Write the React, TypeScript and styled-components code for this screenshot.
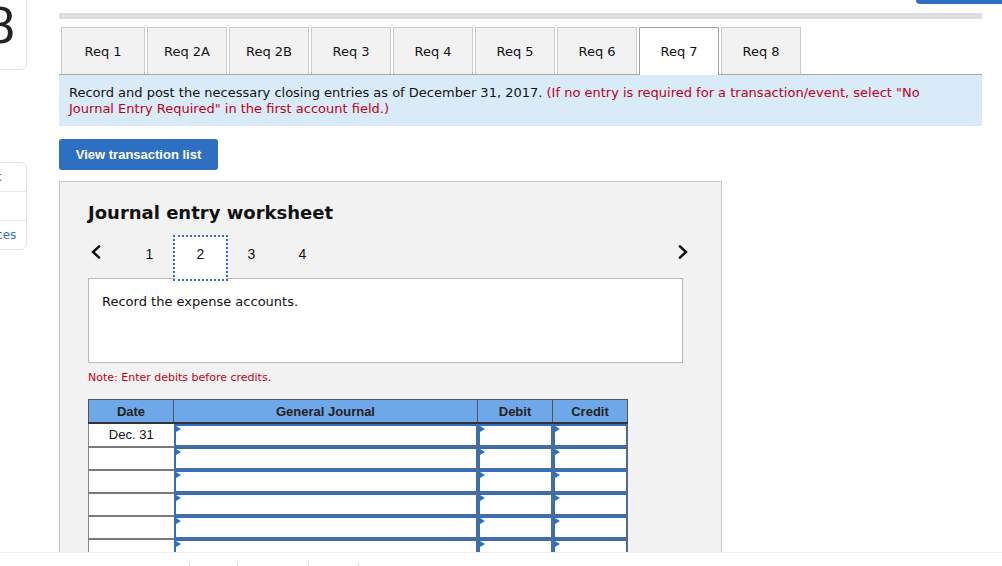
import styled, { createGlobalStyle, css } from "styled-components";

const GlobalStyle = createGlobalStyle`
  html, body {
    margin: 0;
    padding: 0;
    background: #fff;
  }
  body {
    font-family: "DejaVu Sans", Verdana, sans-serif;
    color: #111;
  }
`;

const Page = styled.div`
  width: 1002px;
  height: 566px;
  display: flex;
  flex-direction: column;
  overflow: hidden;
`;

const Body = styled.div`
  flex: 1;
  min-height: 0;
  display: flex;
`;

const Sidebar = styled.div`
  width: 59px;
  flex-shrink: 0;
  overflow: hidden;
  display: flex;
  flex-direction: column;
`;

const SideCard = styled.div<{ $top: number; $height: number }>`
  width: 88px;
  height: ${(p) => p.$height}px;
  margin-left: -61px;
  margin-top: ${(p) => p.$top}px;
  box-sizing: border-box;
  border: 1px solid #e4e4e4;
  border-radius: 6px;
  background: #fff;
  display: flex;
  flex-direction: column;
`;

const BigNumber = styled.div`
  flex: 1;
  display: flex;
  align-items: flex-end;
  justify-content: center;
  padding-bottom: 18px;
  padding-left: 6px;
  font-family: "Liberation Sans", Arial, sans-serif;
  font-size: 52px;
  line-height: 1;
  color: #222;
`;

const SideLink = styled.div`
  height: 29px;
  display: flex;
  align-items: center;
  justify-content: center;
  font-family: "DejaVu Sans", Verdana, sans-serif;
  font-size: 12px;
  color: #2f72c4;
  & + & {
    border-top: 1px solid #e6e6e6;
  }
`;

const Main = styled.div`
  width: 923px;
  padding-right: 20px;
  display: flex;
  flex-direction: column;
`;

const TopRow = styled.div`
  height: 13px;
  margin-right: -20px;
  display: flex;
  justify-content: flex-end;
`;

const TopButton = styled.div`
  width: 86px;
  height: 4px;
  background: #2f6fc2;
  border-radius: 0 0 0 4px;
`;

const GrayBar = styled.div`
  height: 6px;
  background: #dedede;
`;

const Tabs = styled.div`
  margin-top: 8px;
  display: flex;
  gap: 2px;
  padding-left: 2px;
  border-bottom: 1px solid #a9a9a9;
`;

const Tab = styled.div<{ $active?: boolean; $wide?: boolean }>`
  width: ${(p) => (p.$wide ? 84 : 80)}px;
  height: 47px;
  box-sizing: border-box;
  display: flex;
  align-items: center;
  justify-content: center;
  font-size: 13px;
  color: #111;
  background: #f2f2f2;
  border: 1px solid #c9c9c9;
  border-bottom: none;
  ${(p) =>
    p.$active &&
    css`
      background: #fff;
      border-color: #a0a0a0;
      height: 48px;
      margin-bottom: -1px;
    `}
`;

const Info = styled.div`
  background: #d9ebf9;
  padding: 10px 48px 9px 10px;
  font-size: 13px;
  line-height: 16px;
  color: #111;
`;

const Red = styled.span`
  color: #c00018;
`;

const PrimaryButton = styled.button`
  margin-top: 13px;
  width: 159px;
  height: 31px;
  border: none;
  border-radius: 3px;
  background: #2f6fc2;
  color: #fff;
  font-family: "Liberation Sans", Arial, sans-serif;
  font-weight: bold;
  font-size: 13px;
  padding: 0;
`;

const Panel = styled.div`
  margin-top: 11px;
  width: 663px;
  flex: 1;
  min-height: 0;
  overflow: hidden;
  box-sizing: border-box;
  background: #f2f2f2;
  border: 1px solid #c6c6c6;
  border-bottom: none;
  padding: 20px 38px 0 28px;
`;

const Title = styled.h2`
  margin: 0;
  font-size: 18px;
  line-height: 22px;
  font-weight: bold;
  color: #111;
`;

const Steps = styled.div`
  margin-top: 13px;
  height: 41px;
  display: flex;
  align-items: flex-start;
`;

const Arrow = styled.button<{ $right?: boolean }>`
  border: none;
  background: none;
  padding: 0;
  margin-top: 7px;
  width: 16px;
  height: 16px;
  display: flex;
  align-items: center;
  justify-content: center;
  margin-left: ${(p) => (p.$right ? "auto" : "0")};
  margin-right: ${(p) => (p.$right ? "-8px" : "20px")};
`;

const Step = styled.div<{ $active?: boolean }>`
  width: 51px;
  height: 41px;
  box-sizing: border-box;
  padding-top: 9px;
  text-align: center;
  font-family: "Liberation Sans", Arial, sans-serif;
  font-size: 14px;
  line-height: 16px;
  color: #111;
  position: relative;
  ${(p) =>
    p.$active &&
    css`
      background: #fff;
      outline: 2px dotted #2f6fc2;
      outline-offset: 0;
      z-index: 1;
      height: 42px;
    `}
`;

const Prompt = styled.div`
  height: 85px;
  box-sizing: border-box;
  background: #fff;
  border: 1px solid #b8b8b8;
  padding: 15px 13px;
  font-size: 13px;
  line-height: 16px;
  color: #111;
`;

const Note = styled.div`
  margin-top: 8px;
  font-size: 11px;
  line-height: 14px;
  color: #c00018;
`;

const Table = styled.table`
  margin-top: 14px;
  border-collapse: collapse;
  table-layout: fixed;
  width: 539px;
  font-family: "Liberation Sans", Arial, sans-serif;
  font-size: 13px;
`;

const Th = styled.th<{ $w: number }>`
  width: ${(p) => p.$w}px;
  height: 22px;
  padding: 0;
  background: #6fa8e8;
  color: #222;
  font-weight: bold;
  text-align: center;
  border: 1px solid #555;
  border-bottom: 2px solid #333;
`;

const DateCell = styled.td`
  height: 21px;
  padding: 0;
  background: #fff;
  text-align: center;
  color: #111;
  border-left: 1px solid #888;
  border-bottom: 2px solid #7a7a7a;
`;

const InputCell = styled.td`
  height: 21px;
  padding: 0;
  background: #777;
  border-right: 1px solid #6a6a6a;
  border-bottom: 1px solid #6a6a6a;
`;

const Field = styled.div`
  height: 19px;
  background: #fff;
  border: 2px solid #2f6fc2;
  border-bottom-width: 1px;
  border-right-width: 1px;
  position: relative;
  &::before {
    content: "";
    position: absolute;
    left: 0;
    top: 0;
    border-left: 5px solid #2f6fc2;
    border-top: 3px solid transparent;
    border-bottom: 3px solid transparent;
  }
`;

const Footer = styled.div`
  height: 14px;
  flex-shrink: 0;
  box-sizing: border-box;
  border-top: 1px solid #ececec;
  background: #fff;
  display: flex;
  align-items: flex-end;
  padding-left: 189px;
`;

const Tick = styled.span<{ $gap: number }>`
  width: 1px;
  height: 4px;
  background: #e2e2e2;
  margin-left: ${(p) => p.$gap}px;
`;

function Chevron({ right }: { right?: boolean }) {
  return (
    <svg width="10" height="14" viewBox="0 0 10 14">
      <polyline
        points={right ? "2,1.5 8,7 2,12.5" : "8,1.5 2,7 8,12.5"}
        fill="none"
        stroke="#111"
        strokeWidth="2.4"
        strokeLinecap="square"
      />
    </svg>
  );
}

const tabs = ["Req 1", "Req 2A", "Req 2B", "Req 3", "Req 4", "Req 5", "Req 6", "Req 7", "Req 8"];
const rows = ["Dec. 31", "", "", "", "", ""];

export default function App() {
  return (
    <>
      <GlobalStyle />
      <Page>
        <Body>
          <Sidebar>
            <SideCard $top={-20} $height={90}>
              <BigNumber>38</BigNumber>
            </SideCard>
            <SideCard $top={92} $height={88}>
              <SideLink>eBook</SideLink>
              <SideLink>Print</SideLink>
              <SideLink>References</SideLink>
            </SideCard>
          </Sidebar>
          <Main>
            <TopRow>
              <TopButton />
            </TopRow>
            <GrayBar />
            <Tabs>
              {tabs.map((t, i) => (
                <Tab key={t} $wide={i === 0} $active={t === "Req 7"}>
                  {t}
                </Tab>
              ))}
            </Tabs>
            <Info>
              Record and post the necessary closing entries as of December 31, 2017.{" "}
              <Red>
                (If no entry is required for a transaction/event, select "No Journal Entry
                Required" in the first account field.)
              </Red>
            </Info>
            <div>
              <PrimaryButton>View transaction list</PrimaryButton>
            </div>
            <Panel>
              <Title>Journal entry worksheet</Title>
              <Steps>
                <Arrow>
                  <Chevron />
                </Arrow>
                {[1, 2, 3, 4].map((n) => (
                  <Step key={n} $active={n === 2}>
                    {n}
                  </Step>
                ))}
                <Arrow $right>
                  <Chevron right />
                </Arrow>
              </Steps>
              <Prompt>Record the expense accounts.</Prompt>
              <Note>Note: Enter debits before credits.</Note>
              <Table>
                <thead>
                  <tr>
                    <Th $w={84}>Date</Th>
                    <Th $w={303}>General Journal</Th>
                    <Th $w={74}>Debit</Th>
                    <Th $w={74}>Credit</Th>
                  </tr>
                </thead>
                <tbody>
                  {rows.map((d, i) => (
                    <tr key={i}>
                      <DateCell>{d}</DateCell>
                      <InputCell>
                        <Field />
                      </InputCell>
                      <InputCell>
                        <Field />
                      </InputCell>
                      <InputCell>
                        <Field />
                      </InputCell>
                    </tr>
                  ))}
                </tbody>
              </Table>
            </Panel>
          </Main>
        </Body>
        <Footer>
          <Tick $gap={0} />
          <Tick $gap={47} />
          <Tick $gap={70} />
          <Tick $gap={49} />
        </Footer>
      </Page>
    </>
  );
}
